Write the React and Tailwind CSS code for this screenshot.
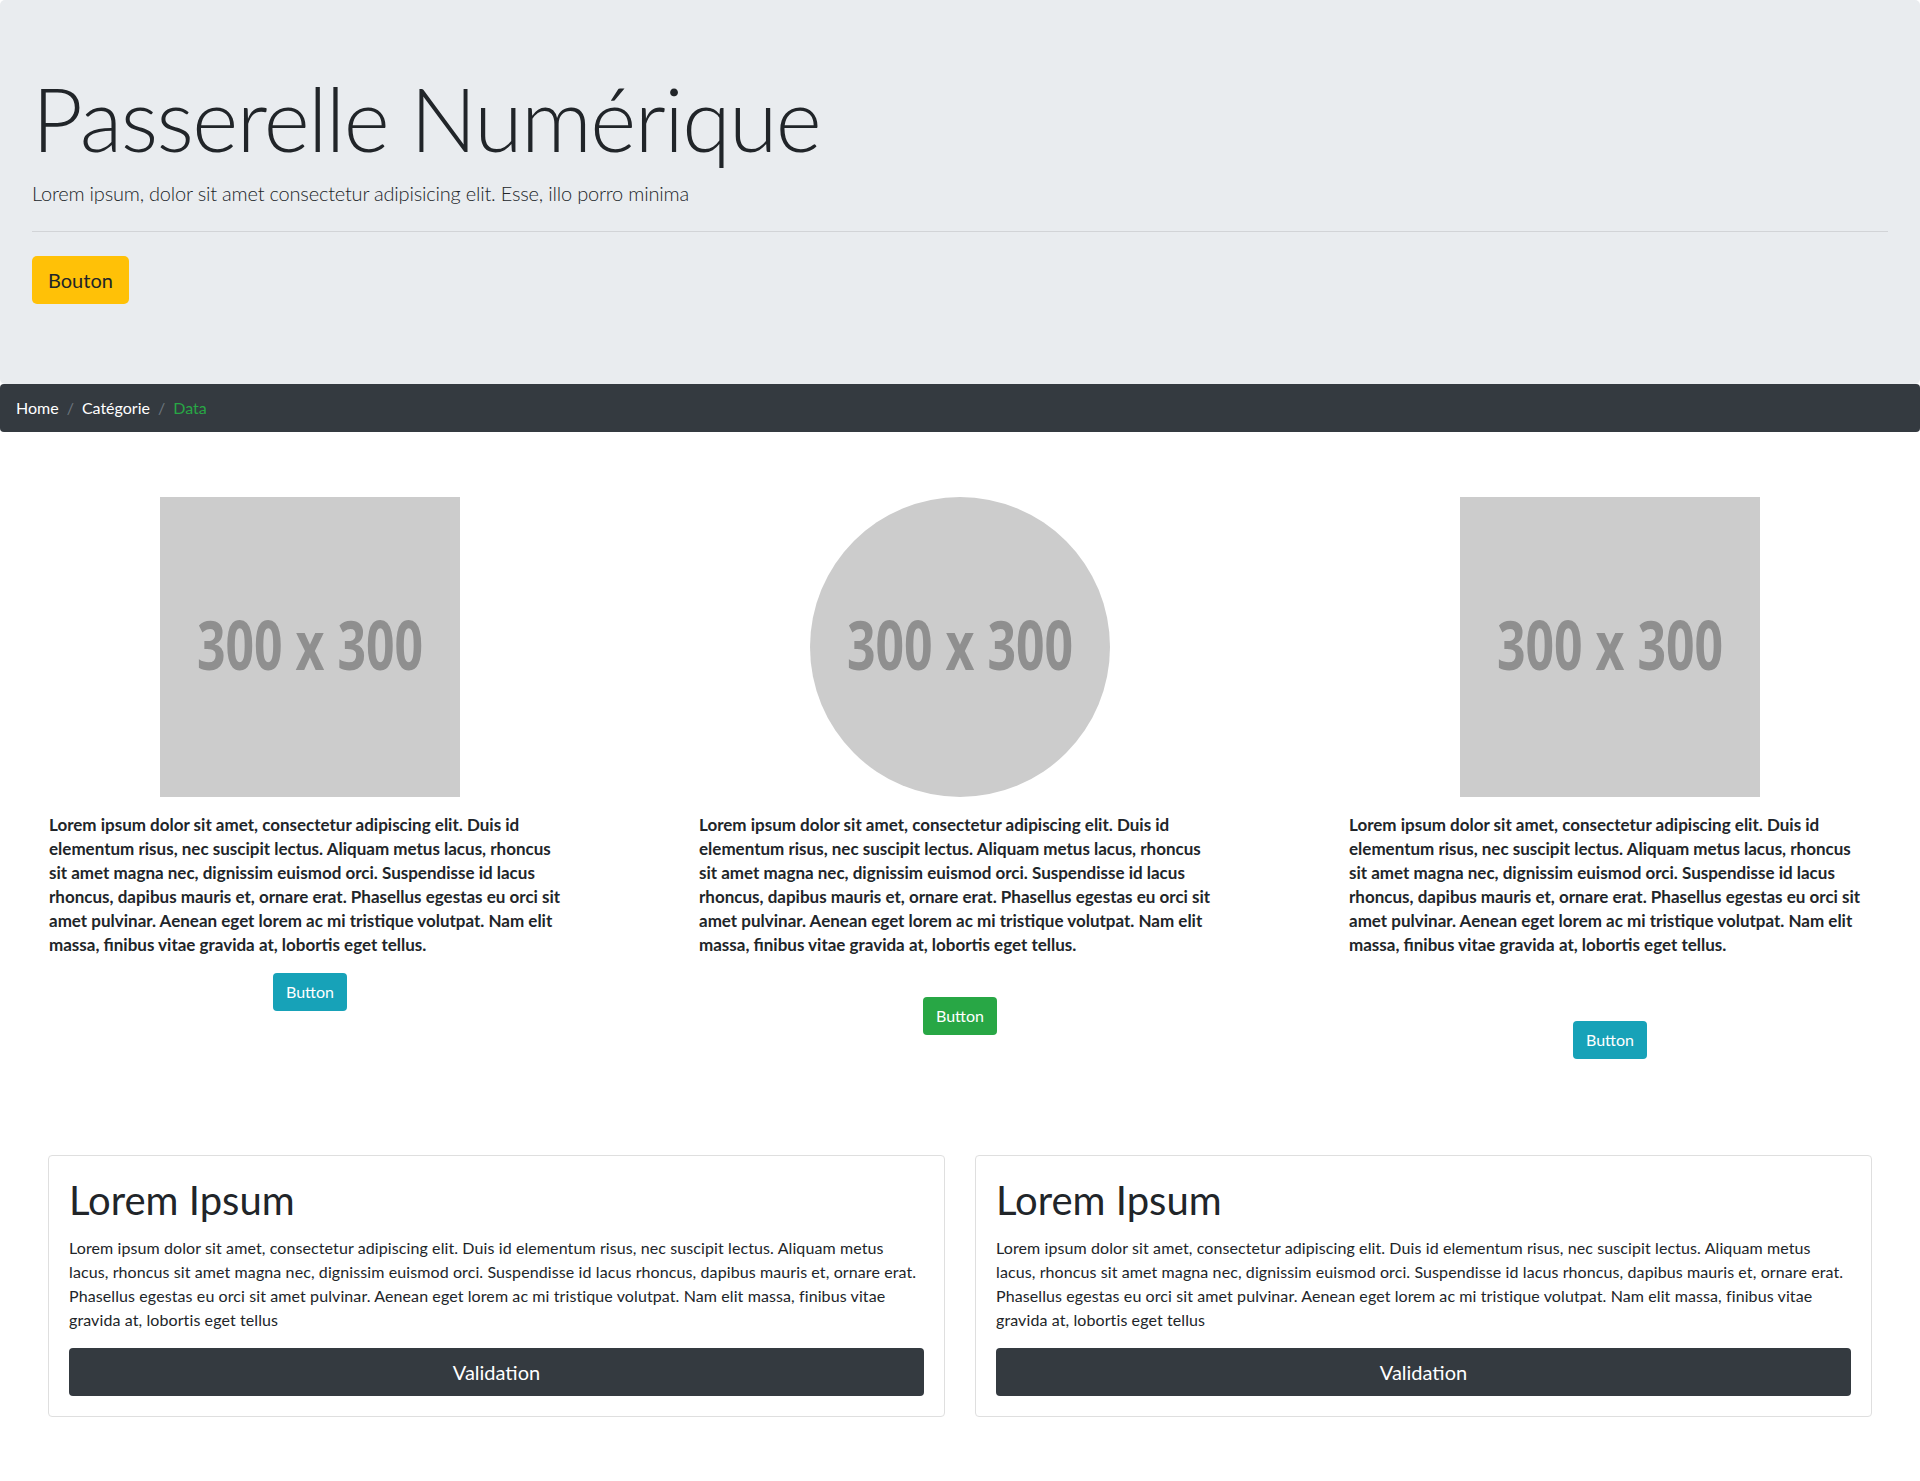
import React from "react";

const colText = [
  "Lorem ipsum dolor sit amet, consectetur adipiscing elit. Duis id",
  "elementum risus, nec suscipit lectus. Aliquam metus lacus, rhoncus",
  "sit amet magna nec, dignissim euismod orci. Suspendisse id lacus",
  "rhoncus, dapibus mauris et, ornare erat. Phasellus egestas eu orci sit",
  "amet pulvinar. Aenean eget lorem ac mi tristique volutpat. Nam elit",
  "massa, finibus vitae gravida at, lobortis eget tellus.",
];

const cardText = [
  "Lorem ipsum dolor sit amet, consectetur adipiscing elit. Duis id elementum risus, nec suscipit lectus. Aliquam metus",
  "lacus, rhoncus sit amet magna nec, dignissim euismod orci. Suspendisse id lacus rhoncus, dapibus mauris et, ornare erat.",
  "Phasellus egestas eu orci sit amet pulvinar. Aenean eget lorem ac mi tristique volutpat. Nam elit massa, finibus vitae",
  "gravida at, lobortis eget tellus",
];

function Lines({ lines }) {
  return lines.map((l, i) => (
    <React.Fragment key={i}>
      {l}
      {i < lines.length - 1 && <br />}
    </React.Fragment>
  ));
}

function Placeholder({ round }) {
  return (
    <div
      className={
        "w-[300px] h-[300px] bg-[#cccccc] mx-auto " +
        (round ? "rounded-full" : "")
      }
    >
      <svg width="300" height="300" viewBox="0 0 300 300" className="block">
        <g transform="scale(1 1.5)">
          <text
            x="150"
            y="115.3"
            textAnchor="middle"
            textLength="226"
            lengthAdjust="spacingAndGlyphs"
            fontFamily="'Open Sans', sans-serif"
            fontWeight="700"
            fontSize="46"
            fill="#8f8f8f"
          >
            300 x 300
          </text>
        </g>
      </svg>
    </div>
  );
}

function Column({ round, btnClass, btnMargin }) {
  return (
    <div className="px-[64px]">
      <Placeholder round={round} />
      <p className="mt-4 text-[17px] leading-6 font-bold whitespace-nowrap">
        <Lines lines={colText} />
      </p>
      <div className={"flex justify-center " + btnMargin}>
        <button
          className={
            "h-[38px] px-[13px] rounded text-white text-[16px] leading-6 " + btnClass
          }
        >
          Button
        </button>
      </div>
    </div>
  );
}

function Card() {
  return (
    <div className="border border-[#dfdfdf] rounded p-5">
      <h1 className="text-[40px] leading-[48px] font-normal mb-3">Lorem Ipsum</h1>
      <p className="text-[16px] leading-6 mb-4 tracking-[0.1px] whitespace-nowrap">
        <Lines lines={cardText} />
      </p>
      <button className="w-full h-12 bg-[#343a40] text-white text-[20px] rounded">
        Validation
      </button>
    </div>
  );
}

export default function App() {
  return (
    <div className="min-h-[1481px] bg-white text-[#212529] font-['Lato',sans-serif]">
      <div className="bg-[#e9ecef] rounded-[5px] px-8 pt-16 pb-16">
        <h1 className="text-[88px] leading-[108px] font-light mb-[6px] tracking-[-1.6px]">
          Passerelle Numérique
        </h1>
        <p className="text-[20px] leading-[30px] font-light tracking-[-0.2px]">
          Lorem ipsum, dolor sit amet consectetur adipisicing elit. Esse, illo porro minima
        </p>
        <hr className="mt-[23px] mb-[24px] border-0 border-t border-[#d2d4d7]" />
        <div className="mb-4 flex">
          <button className="h-12 px-4 bg-[#ffc107] text-[#212529] text-[20px] rounded-[5px]">
            Bouton
          </button>
        </div>
      </div>
      <nav className="bg-[#343a40] rounded px-4 py-3 text-[16px] leading-6 flex">
        <span className="text-white">Home</span>
        <span className="text-[#6c757d] px-2">/</span>
        <span className="text-white">Catégorie</span>
        <span className="text-[#6c757d] px-2">/</span>
        <span className="text-[#28a745]">Data</span>
      </nav>
      <div className="grid grid-cols-3 -mx-[15px] mt-[65px]">
        <Column round={false} btnClass="bg-[#17a2b8]" btnMargin="mt-4" />
        <Column round={true} btnClass="bg-[#28a745]" btnMargin="mt-10" />
        <Column round={false} btnClass="bg-[#17a2b8]" btnMargin="mt-16" />
      </div>
      <div className="grid grid-cols-2 gap-[30px] px-12 mt-24 pb-16">
        <Card />
        <Card />
      </div>
    </div>
  );
}
